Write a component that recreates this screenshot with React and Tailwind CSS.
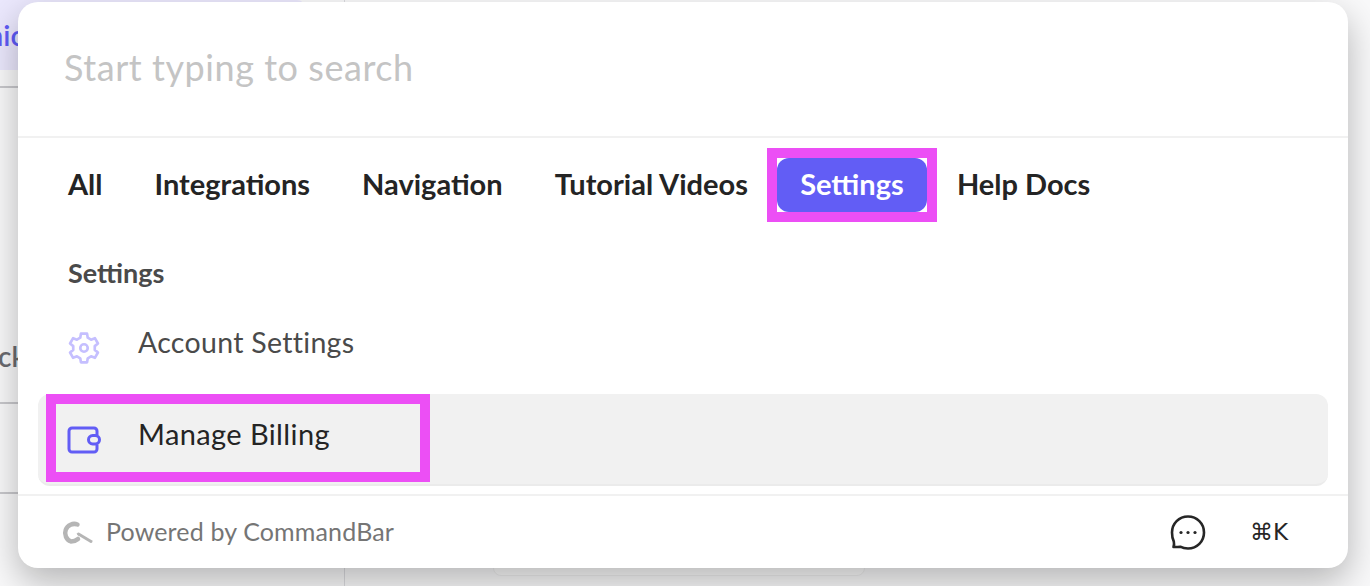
const tabs = ['All', 'Integrations', 'Navigation', 'Tutorial Videos'];

// six flat teeth round the centre of the 24x24 box
const gearPath = () => {
  const pt = (r, deg) => {
    const a = (deg * Math.PI) / 180;
    return `${(12 + r * Math.cos(a)).toFixed(2)} ${(12 + r * Math.sin(a)).toFixed(2)}`;
  };
  const parts = [];
  for (let i = 0; i < 6; i++) {
    const c = i * 60 - 90;
    parts.push(pt(8.2, c - 20), pt(11, c - 12), pt(11, c + 12), pt(8.2, c + 20));
  }
  return `M${parts.join('L')}Z`;
};

function Sidebar() {
  return (
    <div className="w-[345px] h-full shrink-0 bg-[#f9f9fa] border-r border-[#dcdce0] overflow-hidden">
      <div className="h-[70px] w-[305px] bg-[#ebe8fd] rounded-tr-lg flex items-center">
        <span className="text-[#5f5bf7] font-semibold text-[29px] -ml-[13px]">nic</span>
      </div>
      <div className="h-[16px]" />
      <div className="border-t-2 border-[#c8c8cc] h-[316px] pt-[250px]">
        <span className="block text-[#6b6b70] font-semibold text-[28px] leading-[36px] -ml-[2px]">ck</span>
      </div>
      <div className="border-t-2 border-[#c8c8cc] h-[90px]" />
      <div className="border-t-2 border-[#c8c8cc]" />
    </div>
  );
}

function GearIcon() {
  return (
    <svg className="mt-[12px]" width="32" height="32" viewBox="0 0 24 24" fill="none" stroke="#c5bfff" strokeWidth="2" strokeLinejoin="round">
      <path d={gearPath()} />
      <circle cx="12" cy="12" r="2.800" />
    </svg>
  );
}

function WalletIcon() {
  return (
    <svg className="mt-[4px]" width="34" height="28" viewBox="0 0 34 28" fill="none" stroke="#625df5" strokeWidth="3" strokeLinejoin="round">
      <path d="M30 9V5A3 3 0 0 0 27 2H5A3 3 0 0 0 2 5v18a3 3 0 0 0 3 3h22a3 3 0 0 0 3-3v-4.500" />
      <rect x="21.500" y="9.500" width="11" height="8.500" rx="4.200" />
    </svg>
  );
}

function LogoIcon() {
  return (
    <svg width="34" height="26" viewBox="0 0 34 26" fill="none" stroke="#b5b5b5" strokeWidth="4.500" strokeLinecap="round">
      <path d="M17.500 5.500A9 9 0 1 0 11 22.500c2.500 0 5-.8 7-2.500" />
      <path d="M18.500 15l12.500 7.500" strokeWidth="3" />
    </svg>
  );
}

function ChatIcon() {
  return (
    <svg width="36" height="37" viewBox="0 0 36 37" fill="none" stroke="#262626" strokeWidth="2.600" strokeLinejoin="round">
      <path d="M18 2.500c9 0 16 7 16 16s-7 16-16 16c-3 0-5.500-.6-7.800-1.800-2.200.3-4.500.4-6.700.3.700-1.800.7-3.700.3-5.500C2.700 25.500 2 22 2 18.500c0-9 7-16 16-16z" />
      <circle cx="11" cy="18.500" r="1.600" fill="#262626" stroke="none" />
      <circle cx="18" cy="18.500" r="1.600" fill="#262626" stroke="none" />
      <circle cx="25" cy="18.500" r="1.600" fill="#262626" stroke="none" />
    </svg>
  );
}

export default function App() {
  return (
    <div className="relative w-[1370px] h-[586px] overflow-hidden bg-[#f9f9fa] font-['Lato','Open_Sans',sans-serif]">
      <div className="h-full flex">
        <Sidebar />
        <div className="flex-1 flex items-end justify-start pl-[148px] pb-[10px]">
          <div className="w-[372px] h-[20px] bg-[#fdfdfd] border border-[#f0f0f0] rounded-lg" />
        </div>
      </div>

      <div className="absolute left-[18px] top-[2px] w-[1330px] h-[566px] bg-white rounded-[20px] shadow-[0_14px_36px_rgba(0,0,0,0.28)] flex flex-col">
        <div className="h-[136px] border-b-2 border-[#f1f1f1] pl-[46px] pt-[41px] text-[36px] leading-[48px] text-[#c4c4c4] tracking-[0.55px]">
          Start typing to search
        </div>

        <div className="h-[100px] pl-[50px] pt-[20px] flex items-start">
          {tabs.map((t) => (
            <span key={t} className="mr-[52px] h-[54px] pb-[2px] flex items-center text-[29px] font-bold text-[#242424] whitespace-nowrap">
              {t}
            </span>
          ))}
          <div className="-ml-[33px] -mt-[10px] border-[10px] border-[#ec4ff5] bg-white">
            <div className="h-[54px] w-[150px] pb-[2px] bg-[#625df5] rounded-xl flex items-center justify-center text-white text-[29px] font-bold">
              Settings
            </div>
          </div>
          <span className="ml-[20px] h-[54px] pb-[2px] flex items-center text-[29px] font-bold text-[#242424] whitespace-nowrap">
            Help Docs
          </span>
        </div>

        <div className="pl-[50px] pt-[24px] h-[46px] flex items-center text-[27px] font-bold text-[#4a4a4a]">
          Settings
        </div>

        <div className="h-[110px] pt-[6px] pl-[50px] flex items-center">
          <GearIcon />
          <span className="ml-[38px] text-[28.5px] text-[#4a4a4a] tracking-[0.3px]">Account Settings</span>
        </div>

        <div className="mx-[20px] h-[92px] bg-[#f1f1f1] border-b-2 border-[#ebebeb] rounded-xl relative">
          <div className="absolute left-[8px] top-0 w-[384px] h-[88px] border-[10px] border-[#ec4ff5] flex items-center pl-[11px]">
            <WalletIcon />
            <span className="ml-[37px] mb-[8px] text-[29px] text-[#242424] tracking-[0.4px]">Manage Billing</span>
          </div>
        </div>

        <div className="mt-[8px] flex-1 border-t-2 border-[#f1f1f1] rounded-b-[20px] pl-[42px] pr-[60px] flex items-center">
          <LogoIcon />
          <span className="ml-[12px] text-[25px] text-[#757575] tracking-[0.15px]">Powered by CommandBar</span>
          <div className="ml-auto flex items-center">
            <ChatIcon />
            <span className="ml-[44px] text-[23px] text-[#262626] font-['DejaVu_Sans',sans-serif]">⌘K</span>
          </div>
        </div>
      </div>
    </div>
  );
}
